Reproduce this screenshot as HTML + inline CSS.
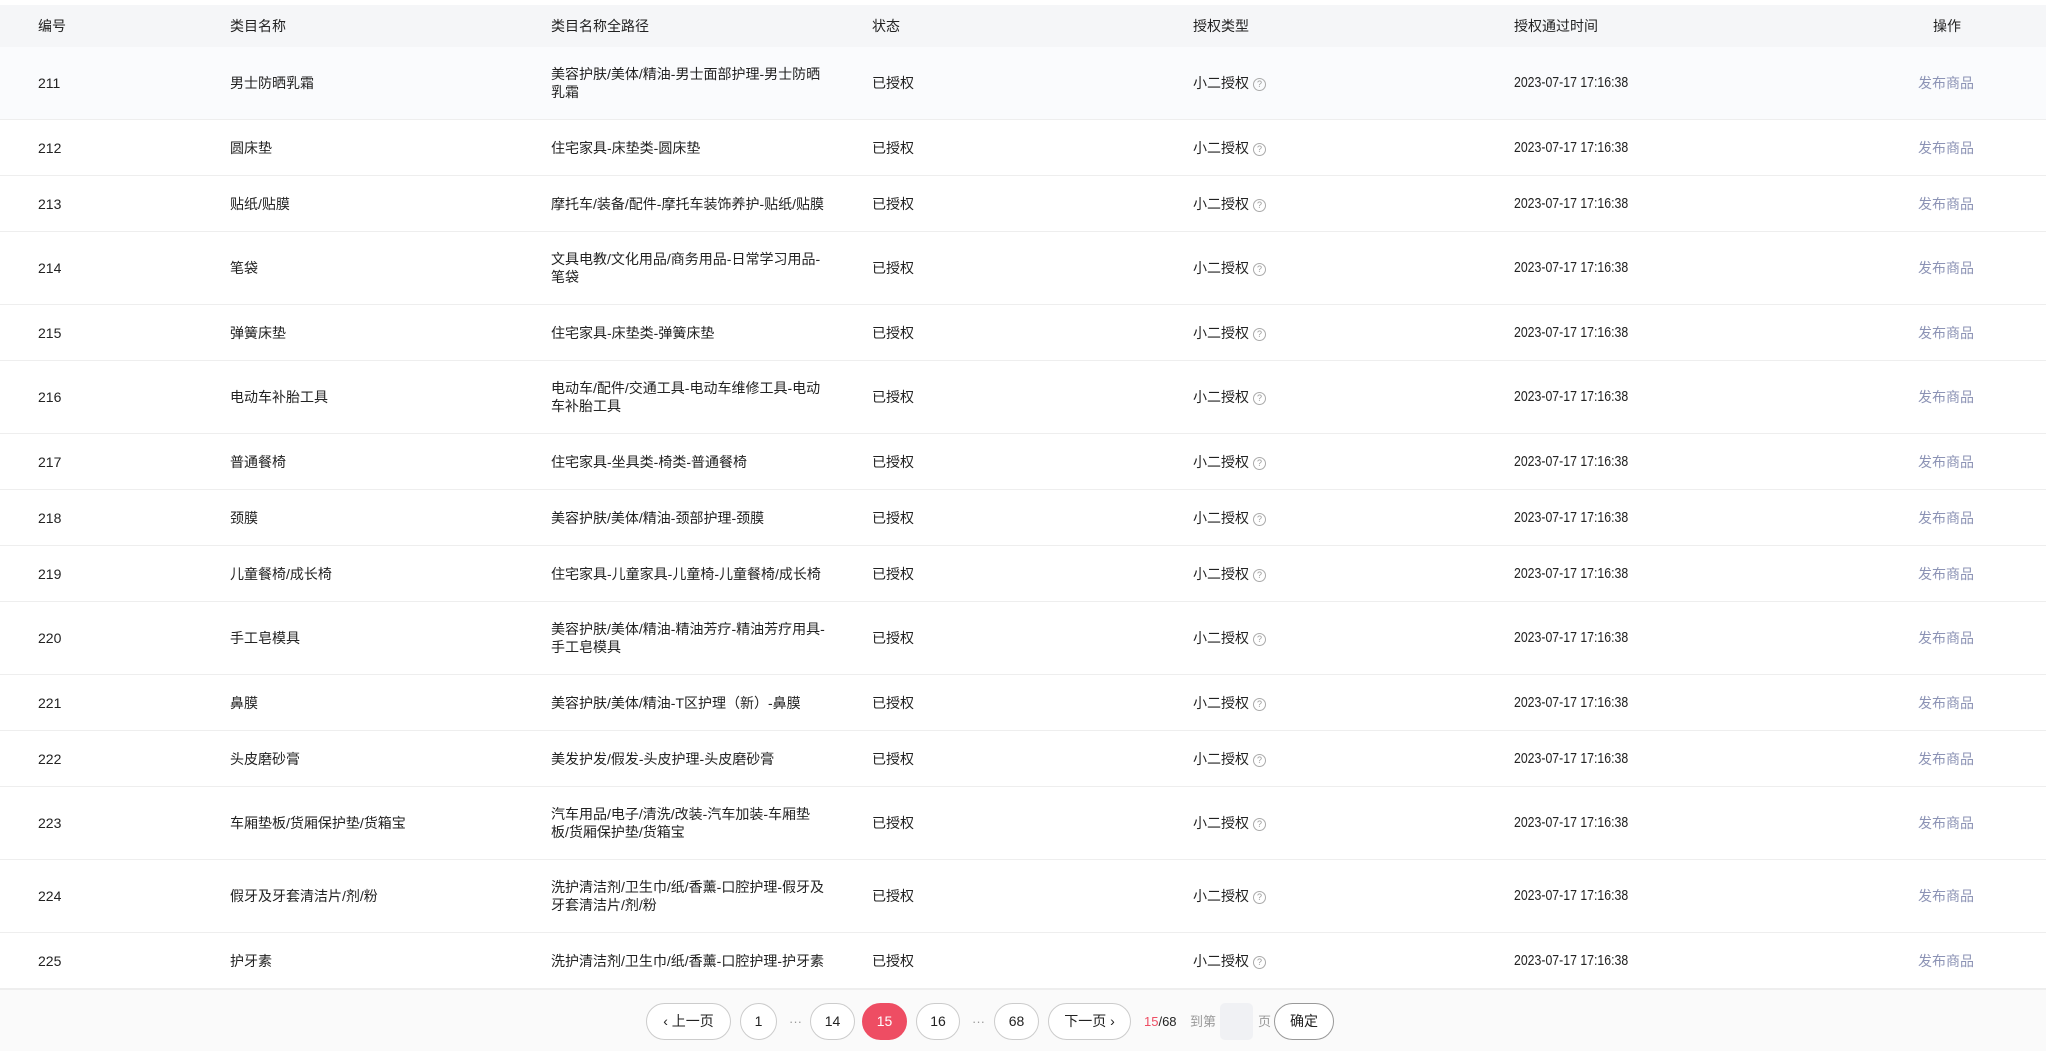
<!DOCTYPE html>
<html><head><meta charset="utf-8"><style>
*{margin:0;padding:0;box-sizing:border-box}
body{width:2046px;height:1051px;background:#fff;font-family:"Liberation Sans","Noto Sans CJK SC",sans-serif;font-size:14px;color:#222;position:relative;overflow:hidden}
.hd{position:absolute;top:5px;left:0;width:2046px;height:42px;background:#f5f6f8}
.row{position:absolute;left:0;width:2046px;border-bottom:1px solid #eee}
.c{position:absolute;top:50%;transform:translateY(-50%);line-height:18px}
.c0{left:38px}.c1{left:230px}.c2{left:551px;width:290px}.c3{left:872px}.c4{left:1193px}.c5{left:1514px}.c6{left:1918px;color:#8c93b5}
.row .c5{transform:translateY(-50%) scaleX(.82);transform-origin:left center;font-size:15px}
.hd .c6{color:#222;left:1933px}
.q{display:inline-block;width:13px;height:13px;border:1px solid #aaa;border-radius:50%;font-size:9px;line-height:11px;text-align:center;color:#999;vertical-align:1px;margin-left:4px}
.pg{position:absolute;top:989px;left:0;width:2046px;height:62px;background:#fafafa;border-top:1px solid #eee}
.b{position:absolute;top:13px;height:37px;border:1px solid #ccc;border-radius:19px;background:#fff;text-align:center;line-height:35px;font-size:14px;color:#222}
.t{position:absolute;top:13px;line-height:37px;font-size:13px;color:#999}
</style></head><body>
<div class="hd"><span class="c c0">编号</span><span class="c c1">类目名称</span><span class="c c2">类目名称全路径</span><span class="c c3">状态</span><span class="c c4">授权类型</span><span class="c c5">授权通过时间</span><span class="c c6">操作</span></div>
<div id="rows"></div>
<div class="pg">
<div class="b" style="left:646px;width:85px">‹ 上一页</div>
<div class="b" style="left:740px;width:37px">1</div>
<div class="t" style="left:789px">···</div>
<div class="b" style="left:810px;width:45px">14</div>
<div class="b" style="left:862px;width:45px;background:#ee4d63;border-color:#ee4d63;color:#fff">15</div>
<div class="b" style="left:916px;width:44px">16</div>
<div class="t" style="left:972px">···</div>
<div class="b" style="left:994px;width:45px">68</div>
<div class="b" style="left:1048px;width:83px">下一页 ›</div>
<div class="t" style="left:1144px;color:#222"><span style="color:#ee4d63">15</span>/68</div>
<div class="t" style="left:1190px">到第</div>
<div style="position:absolute;top:13px;left:1220px;width:33px;height:37px;background:#f0f1f4;border-radius:5px"></div>
<div class="t" style="left:1258px">页</div>
<div class="b" style="left:1274px;width:60px;border-color:#999">确定</div>
</div>
<script>
var d=[[211,"男士防晒乳霜","美容护肤/美体/精油-男士面部护理-男士防晒<br>乳霜"],[212,"圆床垫","住宅家具-床垫类-圆床垫"],[213,"贴纸/贴膜","摩托车/装备/配件-摩托车装饰养护-贴纸/贴膜"],[214,"笔袋","文具电教/文化用品/商务用品-日常学习用品-<br>笔袋"],[215,"弹簧床垫","住宅家具-床垫类-弹簧床垫"],[216,"电动车补胎工具","电动车/配件/交通工具-电动车维修工具-电动<br>车补胎工具"],[217,"普通餐椅","住宅家具-坐具类-椅类-普通餐椅"],[218,"颈膜","美容护肤/美体/精油-颈部护理-颈膜"],[219,"儿童餐椅/成长椅","住宅家具-儿童家具-儿童椅-儿童餐椅/成长椅"],[220,"手工皂模具","美容护肤/美体/精油-精油芳疗-精油芳疗用具-<br>手工皂模具"],[221,"鼻膜","美容护肤/美体/精油-T区护理（新）-鼻膜"],[222,"头皮磨砂膏","美发护发/假发-头皮护理-头皮磨砂膏"],[223,"车厢垫板/货厢保护垫/货箱宝","汽车用品/电子/清洗/改装-汽车加装-车厢垫<br>板/货厢保护垫/货箱宝"],[224,"假牙及牙套清洁片/剂/粉","洗护清洁剂/卫生巾/纸/香薰-口腔护理-假牙及<br>牙套清洁片/剂/粉"],[225,"护牙素","洗护清洁剂/卫生巾/纸/香薰-口腔护理-护牙素"]];
var y=47,h="";
d.forEach(function(r,i){var H=r[2].indexOf("<br>")>=0?73:56;
h+='<div class="row" style="top:'+y+'px;height:'+H+'px;'+(i==0?'background:#fafbfd':'')+'"><span class="c c0">'+r[0]+'</span><span class="c c1">'+r[1]+'</span><span class="c c2">'+r[2]+'</span><span class="c c3">已授权</span><span class="c c4">小二授权<span class="q">?</span></span><span class="c c5">2023-07-17 17:16:38</span><span class="c c6">发布商品</span></div>';y+=H;});
document.getElementById("rows").innerHTML=h;
</script>
</body></html>
